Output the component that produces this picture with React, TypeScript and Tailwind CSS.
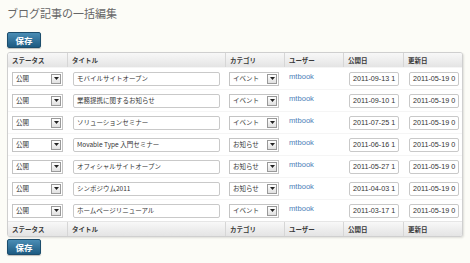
import React from "react";

const entries = [
  { title: "モバイルサイトオープン", category: "イベント", published: "2011-09-13 1" },
  { title: "業務提携に関するお知らせ", category: "イベント", published: "2011-09-10 1" },
  { title: "ソリューションセミナー", category: "イベント", published: "2011-07-25 1" },
  { title: "Movable Type 入門セミナー", category: "お知らせ", published: "2011-06-16 1" },
  { title: "オフィシャルサイトオープン", category: "お知らせ", published: "2011-05-27 1" },
  { title: "シンポジウム2011", category: "お知らせ", published: "2011-04-03 1" },
  { title: "ホームページリニューアル", category: "イベント", published: "2011-03-17 1" },
];

const headers = ["ステータス", "タイトル", "カテゴリ", "ユーザー", "公開日", "更新日"];

const font = "font-['Noto_Sans_CJK_JP',sans-serif]";

const SaveButton = () => (
  <button
    className={`block w-[34px] h-[16px] rounded-[2px] border border-[#1c4d6c] bg-gradient-to-b from-[#4a8db5] to-[#1d5b82] text-white text-[8.5px] font-bold leading-none ${font} shadow-[0_1px_1px_rgba(0,0,0,0.25)]`}
  >
    保存
  </button>
);

const FakeSelect = ({ value, width }: { value: string; width: string }) => (
  <div className={`${width} h-[14px] flex items-center bg-white border border-[#c4c4c4]`}>
    <span className={`flex-1 pl-[3px] text-[6.5px] leading-none text-[#333] ${font}`}>{value}</span>
    <div className="w-[10px] h-[10px] mr-[1px] flex items-center justify-center border border-[#999] bg-gradient-to-b from-white to-[#e0e0e0]">
      <svg width="5" height="3" viewBox="0 0 5 3">
        <path d="M0 0h5L2.5 3z" fill="#222" />
      </svg>
    </div>
  </div>
);

const TextField = ({ value, width, latin }: { value: string; width: string; latin?: boolean }) => (
  <div
    className={`${width} h-[14px] flex items-center overflow-hidden whitespace-nowrap bg-white border border-[#c9c9c9] rounded-[2px] pl-[3px] text-[#333] leading-none ${
      latin ? "font-['Liberation_Sans',sans-serif] text-[7.2px]" : `${font} text-[6.5px]`
    }`}
  >
    {value}
  </div>
);

const HeaderRow = () => (
  <div className="grid grid-cols-[60px_158px_59px_59px_60px_59px] h-[14px] bg-gradient-to-b from-[#f8f8f8] to-[#e4e4e4]">
    {headers.map((h, i) => (
      <div
        key={h}
        className={`flex items-center pl-[4px] text-[6.5px] font-bold text-[#3a3a3a] leading-none ${font} ${
          i < headers.length - 1 ? "border-r border-[#d6d6d6]" : ""
        }`}
      >
        {h}
      </div>
    ))}
  </div>
);

export default function App() {
  return (
    <div className="w-[470px] h-[263px] bg-[#fcfcf7] pl-[7px] pt-[6px] overflow-hidden">
      <h1 className={`text-[11px] leading-[14px] text-[#666] font-normal ${font}`}>ブログ記事の一括編集</h1>

      <div className="mt-[12px] flex">
        <SaveButton />
      </div>

      <div className="mt-[4px] w-[456px] border border-[#cfcfcf] rounded-[3px] overflow-hidden bg-white shadow-[1px_1px_2px_rgba(0,0,0,0.12)]">
        <HeaderRow />
        {entries.map((e) => (
          <div
            key={e.title}
            className="grid grid-cols-[60px_158px_59px_59px_60px_59px] h-[22px] items-center border-t border-[#f5f5f5]"
          >
            <div className="pl-[4px]">
              <FakeSelect value="公開" width="w-[51px]" />
            </div>
            <div className="pl-[5px]">
              <TextField value={e.title} width="w-[147px]" />
            </div>
            <div className="pl-[3px]">
              <FakeSelect value={e.category} width="w-[50px]" />
            </div>
            <div className="pl-[4px] pb-[3px] font-['Liberation_Sans',sans-serif] text-[7.6px] text-[#4a80b8] leading-none">
              mtbook
            </div>
            <div className="pl-[5px]">
              <TextField value={e.published} width="w-[50px]" latin />
            </div>
            <div className="pl-[5px]">
              <TextField value="2011-05-19 0" width="w-[50px]" latin />
            </div>
          </div>
        ))}
        <div className="border-t border-[#e6e6e6]">
          <HeaderRow />
        </div>
      </div>

      <div className="mt-[2px] flex">
        <SaveButton />
      </div>
    </div>
  );
}
